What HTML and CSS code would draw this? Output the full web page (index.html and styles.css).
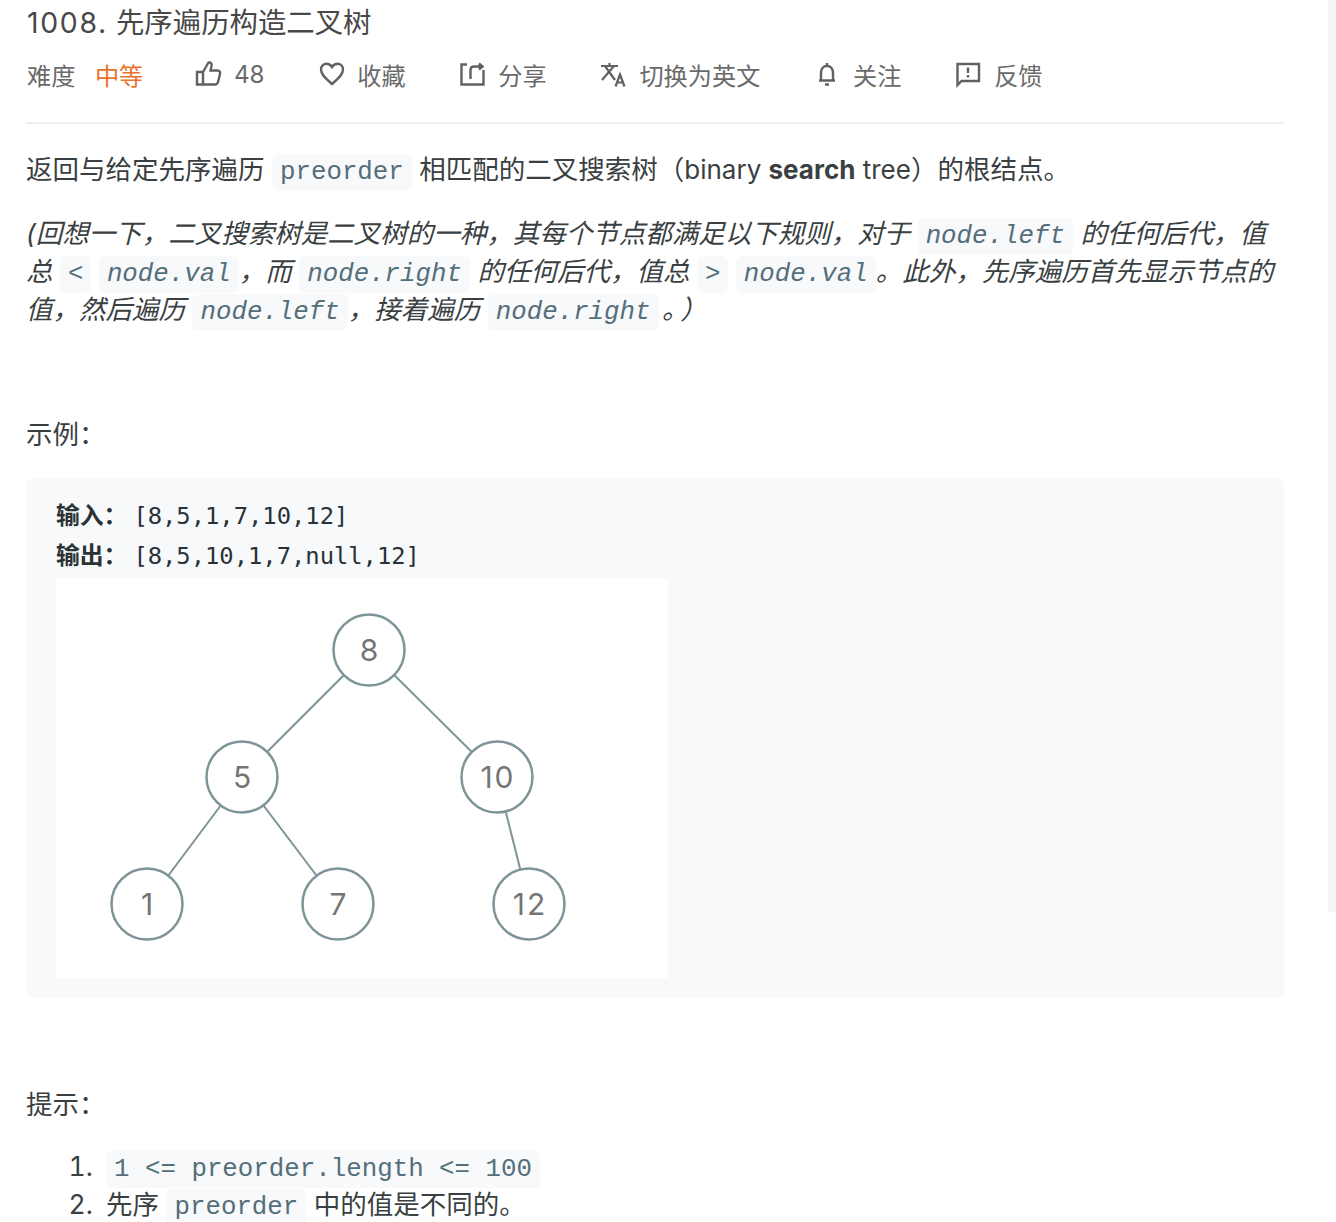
FILE: index.html
```html
<!DOCTYPE html>
<html lang="zh-CN">
<head>
<meta charset="utf-8">
<title>1008. 先序遍历构造二叉树</title>
<link rel="stylesheet" href="styles.css">
</head>
<body>
<div class="scrollbar"></div>
<main class="page">
  <h1 class="title"><span class="num">1008.</span> 先序遍历构造二叉树</h1>
  <nav class="meta">
    <div class="difficulty"><span>难度</span><span class="level">中等</span></div>
    <div class="action"><svg class="icon" viewBox="0 0 28 28"><path d="M3 12h6v12.500H3zM9 12l5.500-9.500c2.500-.5 3.500 1.500 3 3.500l-1 4.500h7c2 0 3 1.500 2.500 3.500l-2 8c-.4 1.500-1.500 2.500-3 2.500H9"/></svg><span>48</span></div>
    <div class="action"><svg class="icon" viewBox="0 0 28 28"><path d="M15 24C9.500 19 4 15 4 9.500 4 6 6.500 3.800 9.500 3.800c2.200 0 4.200 1.200 5.500 3.200 1.300-2 3.300-3.200 5.500-3.200 3 0 5.500 2.200 5.500 5.700 0 5.500-5.500 9.500-11 14.500z"/></svg><span>收藏</span></div>
    <div class="action"><svg class="icon" viewBox="0 0 28 28"><path d="M9 4.500H3.500v20h22V10M12.500 19V10Q12.500 6.500 16 6.500H24M21 3.500l3.500 3-3.500 3"/></svg><span>分享</span></div>
    <div class="action"><svg class="icon icon-thin" viewBox="0 0 28 28"><path d="M2 6h17M10.500 3v3M6 6l10 14M15 6L3 20M16.500 26.500l4.500-12 4.500 12M18 22.500h6"/></svg><span>切换为英文</span></div>
    <div class="action"><svg class="icon" viewBox="0 0 28 28"><path d="M8 20.500V13C8 8.500 10.500 6 14 6s6 2.500 6 7v7.500M6 20.500h16M14 3v3M12 24.500h4"/></svg><span>关注</span></div>
    <div class="action"><svg class="icon" viewBox="0 0 28 28"><path d="M3.500 4H25v17H7.500l-4 4zM14 7.500V13M14 15v2.500"/></svg><span>反馈</span></div>
  </nav>
  <hr class="rule">
  <p class="lead">返回与给定先序遍历 <code>preorder</code> 相匹配的二叉搜索树（<span class="latin">binary <strong>search</strong> tree</span>）的根结点。</p>
  <p class="note"><em>(回想一下，二叉搜索树是二叉树的一种，其每个节点都满足以下规则，对于 <code>node.left</code> 的任何后代，值总 <code>&lt;</code> <code>node.val</code>，而 <code>node.right</code> 的任何后代，值总 <code>&gt;</code> <code>node.val</code>。此外，先序遍历首先显示节点的值，然后遍历 <code>node.left</code>，接着遍历 <code>node.right</code> <span class="end-mark">。</span>）</em></p>
  <p class="heading heading-example">示例：</p>
  <pre class="example"><strong class="label">输入：</strong>[8,5,1,7,10,12]
<strong class="label">输出：</strong>[8,5,10,1,7,null,12]
<svg class="tree" viewBox="0 0 612 400" width="612" height="400">
<g class="edges">
<line x1="313" y1="72" x2="186" y2="199"/><line x1="313" y1="72" x2="441" y2="199"/><line x1="186" y1="199" x2="91" y2="326"/><line x1="186" y1="199" x2="282" y2="326"/><line x1="441" y1="199" x2="473" y2="326"/>
</g>
<g class="nodes">
<circle cx="313" cy="72" r="35.500"/><circle cx="186" cy="199" r="35.500"/><circle cx="441" cy="199" r="35.500"/><circle cx="91" cy="326" r="35.500"/><circle cx="282" cy="326" r="35.500"/><circle cx="473" cy="326" r="35.500"/>
</g>
<g class="labels">
<text x="314" y="83">8</text><text x="187" y="210">5</text><text x="442" y="210">10</text><text x="92" y="337">1</text><text x="283" y="337">7</text><text x="474" y="337">12</text>
</g>
</svg></pre>
  <p class="heading heading-hint">提示：</p>
  <ol class="hints">
    <li><code>1 &lt;= preorder.length &lt;= 100</code></li>
    <li>先序 <code>preorder</code> 中的值是不同的。</li>
  </ol>
</main>
</body>
</html>
```
FILE: styles.css
```css
html, body {
  margin: 0;
  height: 1222px;
  overflow: hidden;
  background: #fff;
}
body {
  position: relative;
  font-family: Inter, "Noto Sans CJK SC", sans-serif;
  color: #3a3f42;
}
.scrollbar {
  position: absolute;
  top: 0;
  right: 0;
  width: 8px;
  height: 912px;
  background: #f5f5f5;
}
.page {
  width: 1258px;
  margin-left: 26px;
}
.title {
  margin: 0;
  height: 46px;
  font-size: 28.400px;
  line-height: 46px;
  font-weight: 400;
  color: #484848;
}
.num {
  margin-left: 1px;
  letter-spacing: 1.700px;
}
.meta {
  display: flex;
  align-items: center;
  gap: 52.700px;
  height: 60px;
  margin-top: -2px;
  font-size: 24.200px;
  color: #6a6a6a;
}
.difficulty {
  display: flex;
  gap: 19.500px;
  margin-left: 1px;
  margin-right: -2px;
}
.level {
  color: #e8742c;
}
.action {
  display: flex;
  align-items: center;
  gap: 12px;
}
.icon {
  width: 28px;
  height: 28px;
  fill: none;
  stroke: #616161;
  stroke-width: 2.400;
}
.icon-thin {
  stroke-width: 2.200;
}
.rule {
  height: 2px;
  margin: 18px 0 0;
  border: 0;
  background: #eeeeee;
}
.lead, .note, .heading {
  margin: 0;
  font-size: 26.500px;
  line-height: 38px;
}
.lead {
  margin-top: 26px;
}
.latin {
  font-size: 26px;
}
.note {
  margin-top: 25px;
}
.end-mark {
  letter-spacing: 5px;
  margin-left: -4px;
}
code {
  padding: 4px 8px;
  border-radius: 6px;
  background: #f7f9fa;
  color: #546e7a;
  font-family: "Liberation Mono", "Noto Sans CJK SC", monospace;
  font-size: 25.800px;
  line-height: 1;
}
.heading-example {
  margin-top: 87px;
}
.example {
  margin: 25px 0 0;
  height: 520px;
  box-sizing: border-box;
  padding: 18px 30px 0;
  border-radius: 8px;
  background: #f7f9fa;
  font-family: "DejaVu Sans Mono", "Noto Sans CJK SC", monospace;
  font-size: 23.800px;
  line-height: 40px;
  color: #2b3236;
  white-space: pre-wrap;
}
.label {
  margin-right: 6px;
}
.tree {
  display: block;
  margin-top: 2px;
  background: #fff;
}
.edges line {
  stroke: #7e9498;
  stroke-width: 2;
}
.nodes circle {
  fill: #fff;
  stroke: #7e9498;
  stroke-width: 2.500;
}
.labels text {
  fill: #757575;
  font-family: Inter, sans-serif;
  font-size: 30px;
  letter-spacing: 2px;
  text-anchor: middle;
}
.heading-hint {
  margin-top: 87px;
}
.hints {
  margin: 24px 0 0;
  padding: 0 0 0 80px;
  font-size: 26.500px;
  line-height: 38px;
}
.hints li::marker {
  content: counter(list-item) ".\2002";
}
```
